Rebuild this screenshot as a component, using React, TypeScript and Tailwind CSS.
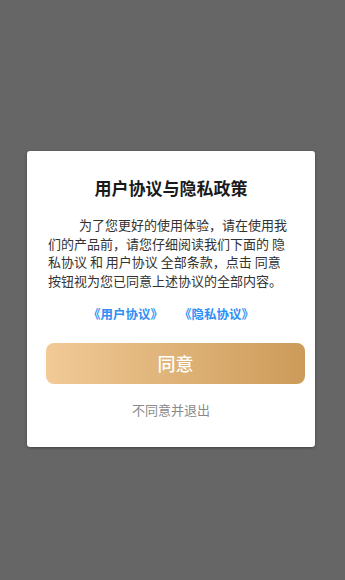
import React from "react";

const App = () => {
  return (
    <div
      className="min-h-[580px] w-full bg-[#666666] flex justify-center pt-[151px] pr-[3px]"
      style={{ fontFamily: '"Noto Sans CJK SC", "Noto Sans", sans-serif' }}
    >
      <div className="w-[288px] h-[296px] bg-white rounded-[3px] shadow-[0_1px_3px_rgba(0,0,0,0.35)] flex flex-col pt-[25px]">
        <h2 className="text-center text-[17px] leading-[24px] font-bold text-[#1a1a1a]">
          用户协议与隐私政策
        </h2>
        <p className="mt-[16px] px-[21px] text-[13px] leading-[18.5px] text-[#333] indent-[31px]">
          为了您更好的使用体验，请在使用我们的产品前，请您仔细阅读我们下面的 隐私协议 和 用户协议 全部条款，点击 同意 按钮视为您已同意上述协议的全部内容。
        </p>
        <div className="mt-[15px] flex justify-center gap-[16px] text-[12.5px] leading-[18px] font-semibold text-[#2f8ff5]">
          <span>《用户协议》</span>
          <span>《隐私协议》</span>
        </div>
        <button className="mt-[20px] ml-[19px] mr-[10px] h-[41px] rounded-[8px] bg-gradient-to-r from-[#f1ca96] to-[#cc9b59] text-white text-[18px] font-medium">
          同意
        </button>
        <button className="mt-[17px] text-center text-[13px] leading-[18px] text-[#8a8a8a]">
          不同意并退出
        </button>
      </div>
    </div>
  );
};

export default App;
